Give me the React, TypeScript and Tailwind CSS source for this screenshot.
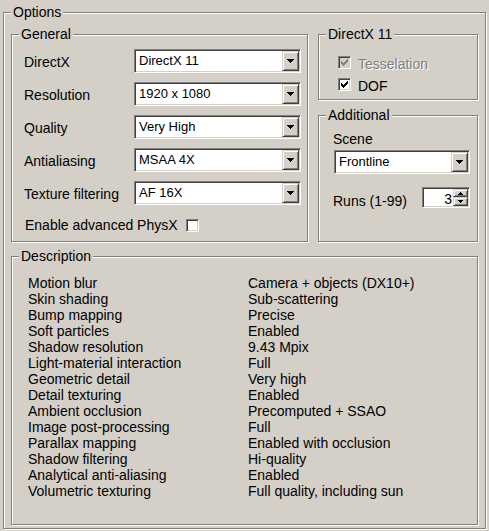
import React from "react";
import clsx from "clsx";

function Group({ title, className, children }: { title: string; className?: string; children?: React.ReactNode }) {
  return (
    <div className={clsx("relative border border-[#808080] shadow-[inset_1px_1px_0_#fff,1px_1px_0_#fff]", className)}>
      <span className="absolute -top-[9px] left-[7px] bg-[#d4d0c8] px-[2px] leading-[16px] whitespace-nowrap">{title}</span>
      {children}
    </div>
  );
}

function DownArrow() {
  return (
    <svg width="7" height="4" viewBox="0 0 7 4" shapeRendering="crispEdges">
      <path d="M0 0h7v1H0z M1 1h5v1H1z M2 2h3v1H2z M3 3h1v1H3z" fill="#000" />
    </svg>
  );
}

function Combo({ value, className }: { value: string; className: string }) {
  return (
    <div
      className={clsx(
        "flex h-[24px] border border-t-[#808080] border-l-[#808080] border-b-white border-r-white bg-white p-[1px] shadow-[inset_1px_1px_0_#404040,inset_-1px_-1px_0_#d4d0c8]",
        className
      )}
    >
      <div className="flex flex-1 items-center pl-[3px] text-[13px] leading-[16px] whitespace-nowrap overflow-hidden">{value}</div>
      <div className="flex w-[17px] items-center justify-center border border-t-[#d4d0c8] border-l-[#d4d0c8] border-b-[#404040] border-r-[#404040] bg-[#d4d0c8] shadow-[inset_1px_1px_0_#fff,inset_-1px_-1px_0_#808080]">
        <DownArrow />
      </div>
    </div>
  );
}

function Check({ checked, disabled }: { checked?: boolean; disabled?: boolean }) {
  return (
    <div
      className={clsx(
        "flex h-[13px] w-[13px] shrink-0 items-center justify-center border border-t-[#808080] border-l-[#808080] border-b-white border-r-white shadow-[inset_1px_1px_0_#404040,inset_-1px_-1px_0_#d4d0c8]",
        disabled ? "bg-[#d4d0c8]" : "bg-white"
      )}
    >
      {checked && (
        <svg width="7" height="7" viewBox="0 0 7 7" shapeRendering="crispEdges">
          <path
            d="M0 2h1v3H0z M1 3h1v3H1z M2 4h1v3H2z M3 3h1v3H3z M4 2h1v3H4z M5 1h1v3H5z M6 0h1v3H6z"
            fill={disabled ? "#808080" : "#000"}
          />
        </svg>
      )}
    </div>
  );
}

const rows: [string, string][] = [
  ["DirectX", "DirectX 11"],
  ["Resolution", "1920 x 1080"],
  ["Quality", "Very High"],
  ["Antialiasing", "MSAA 4X"],
  ["Texture filtering", "AF 16X"],
];

const desc: [string, string][] = [
  ["Motion blur", "Camera + objects (DX10+)"],
  ["Skin shading", "Sub-scattering"],
  ["Bump mapping", "Precise"],
  ["Soft particles", "Enabled"],
  ["Shadow resolution", "9.43 Mpix"],
  ["Light-material interaction", "Full"],
  ["Geometric detail", "Very high"],
  ["Detail texturing", "Enabled"],
  ["Ambient occlusion", "Precomputed + SSAO"],
  ["Image post-processing", "Full"],
  ["Parallax mapping", "Enabled with occlusion"],
  ["Shadow filtering", "Hi-quality"],
  ["Analytical anti-aliasing", "Enabled"],
  ["Volumetric texturing", "Full quality, including sun"],
];

export default function App() {
  return (
    <div className="h-[531px] w-[489px] bg-[#d4d0c8] pl-[3px] pt-[12px] font-['Liberation_Sans','Arial',sans-serif] text-[14px] leading-[16px] text-black">
      <Group title="Options" className="h-[517px] w-[483px] px-[7px] pt-[21px]">
        <div className="flex gap-[10px]">
          <Group title="General" className="h-[208px] w-[297px] pl-[12px] pt-[14px]">
            <div className="flex flex-col gap-[9px]">
              {rows.map(([label, value]) => (
                <div key={label} className="flex h-[24px] items-center">
                  <div className="w-[110px] pt-[2px]">{label}</div>
                  <Combo value={value} className="w-[167px]" />
                </div>
              ))}
            </div>
            <div className="mt-[8px] flex h-[24px] items-center pl-[1px]">
              <span>Enable advanced PhysX</span>
              <div className="ml-[8px]">
                <Check />
              </div>
            </div>
          </Group>
          <div className="flex w-[160px] flex-col gap-[15px]">
            <Group title="DirectX 11" className="h-[66px] pl-[19px] pt-[21px]">
              <div className="flex flex-col gap-[9px]">
                <div className="flex h-[13px] items-center">
                  <Check checked disabled />
                  <span className="ml-[7px] pt-[3px] text-[#808080] text-shadow-[1px_1px_0_#fff]">Tesselation</span>
                </div>
                <div className="flex h-[13px] items-center">
                  <Check checked />
                  <span className="ml-[7px] pt-[3px]">DOF</span>
                </div>
              </div>
            </Group>
            <Group title="Additional" className="h-[127px] pl-[14px] pt-[15px]">
              <div>Scene</div>
              <Combo value="Frontline" className="ml-[1px] mt-[3px] w-[136px]" />
              <div className="mt-[13px] flex h-[21px] items-center">
                <div className="w-[89px] pt-[6px]">Runs (1-99)</div>
                <div className="flex h-[21px] w-[48px] border border-t-[#808080] border-l-[#808080] border-b-white border-r-white bg-white p-[1px] shadow-[inset_1px_1px_0_#404040,inset_-1px_-1px_0_#d4d0c8]">
                  <div className="flex flex-1 items-center justify-end pr-[1px] pt-[2px]">3</div>
                  <div className="flex w-[15px] flex-col">
                    <div className="flex h-[8px] items-center justify-center border border-t-[#d4d0c8] border-l-[#d4d0c8] border-b-[#404040] border-r-[#404040] bg-[#d4d0c8] shadow-[inset_1px_1px_0_#fff,inset_-1px_-1px_0_#808080]">
                      <svg width="5" height="3" viewBox="0 0 5 3" shapeRendering="crispEdges">
                        <path d="M2 0h1v1H2z M1 1h3v1H1z M0 2h5v1H0z" fill="#000" />
                      </svg>
                    </div>
                    <div className="flex h-[9px] items-center justify-center border border-t-[#d4d0c8] border-l-[#d4d0c8] border-b-[#404040] border-r-[#404040] bg-[#d4d0c8] shadow-[inset_1px_1px_0_#fff,inset_-1px_-1px_0_#808080]">
                      <svg width="5" height="3" viewBox="0 0 5 3" shapeRendering="crispEdges">
                        <path d="M0 0h5v1H0z M1 1h3v1H1z M2 2h1v1H2z" fill="#000" />
                      </svg>
                    </div>
                  </div>
                </div>
              </div>
            </Group>
          </div>
        </div>
        <Group title="Description" className="mt-[14px] h-[269px] pl-[16px] pt-[18px]">
          <div className="flex flex-col">
            {desc.map(([k, v]) => (
              <div key={k} className="flex h-[16px] whitespace-nowrap">
                <div className="w-[220px]">{k}</div>
                <div>{v}</div>
              </div>
            ))}
          </div>
        </Group>
      </Group>
    </div>
  );
}
